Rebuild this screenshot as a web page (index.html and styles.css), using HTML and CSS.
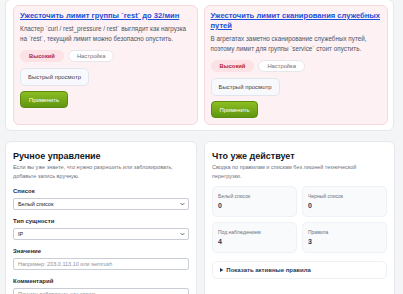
FILE: index.html
```html
<!DOCTYPE html>
<html lang="ru">

<head>
  <meta charset="UTF-8">
  <meta name="viewport" content="width=device-width, initial-scale=1.0">
  <title>Защита от ботов</title>
  <link rel="stylesheet" href="styles.css">
</head>

<body>
  <!-- Рекомендации -->
  <section class="panel suggestions">
    <div class="suggest-grid">
      <div class="suggest">
        <a href="#" class="suggest-title">Ужесточить лимит группы `rest` до 32/мин</a>
        <p class="suggest-text">Кластер `curl / rest_pressure / rest` выглядит как нагрузка на `rest`, текущий лимит можно безопасно опустить.</p>
        <div class="tags">
          <span class="tag high">Высокий</span>
          <span class="tag">Настройка</span>
        </div>
        <button class="btn-light">Быстрый просмотр</button>
        <button class="btn-apply">Применить</button>
      </div>
      <div class="suggest">
        <a href="#" class="suggest-title">Ужесточить лимит сканирования служебных путей</a>
        <p class="suggest-text">В агрегатах заметно сканирование служебных путей, поэтому лимит для группы `service` стоит опустить.</p>
        <div class="tags">
          <span class="tag high">Высокий</span>
          <span class="tag">Настройка</span>
        </div>
        <button class="btn-light">Быстрый просмотр</button>
        <button class="btn-apply">Применить</button>
      </div>
    </div>
  </section>

  <div class="columns">
    <!-- Ручное управление -->
    <section class="panel">
      <h2>Ручное управление</h2>
      <p class="muted">Если вы уже знаете, что нужно разрешить или заблокировать, добавьте запись вручную.</p>
      <form class="manual">
        <label>Список</label>
        <div class="select">
          <select>
            <option>Белый список</option>
            <option>Черный список</option>
          </select>
          <svg viewBox="0 0 8 5" width="5" height="4"><path d="M1 1l3 3 3-3" fill="none" stroke="#333" stroke-width="1.2"/></svg>
        </div>
        <label>Тип сущности</label>
        <div class="select">
          <select>
            <option>IP</option>
            <option>User-Agent</option>
          </select>
          <svg viewBox="0 0 8 5" width="5" height="4"><path d="M1 1l3 3 3-3" fill="none" stroke="#333" stroke-width="1.2"/></svg>
        </div>
        <label>Значение</label>
        <input type="text" placeholder="Например: 203.0.113.10 или semrush">
        <label>Комментарий</label>
        <input type="text" placeholder="Почему добавляете эту запись">
      </form>
    </section>

    <!-- Сводка -->
    <section class="panel">
      <h2>Что уже действует</h2>
      <p class="muted">Сводка по правилам и спискам без лишней технической перегрузки.</p>
      <div class="stats">
        <div class="stat"><span>Белый список</span><b>0</b></div>
        <div class="stat"><span>Черный список</span><b>0</b></div>
        <div class="stat"><span>Под наблюдением</span><b>4</b></div>
        <div class="stat"><span>Правила</span><b>3</b></div>
      </div>
      <details class="rules">
        <summary>Показать активные правила</summary>
      </details>
    </section>
  </div>
</body>

</html>
```

FILE: styles.css
```css
body {
  font-family: "Liberation Sans", Arial, sans-serif;
  margin: 0;
  padding: 0 8px 0 5px;
  background-color: #f4f5f7;
  color: #1f2937;
}

.panel {
  background-color: #fff;
  border: 1px solid #e6e8ec;
  border-radius: 6px;
}

.suggestions {
  margin-top: -1px;
  margin-right: 1px;
  padding: 5px 5px 5px 7px;
}

.suggest-grid {
  display: grid;
  grid-template-columns: 1fr 1fr;
  gap: 6px;
}

.suggest {
  background-color: #fdf1f3;
  border: 1px solid #f6d9de;
  border-radius: 6px;
  padding: 5px 6px 6px;
  display: flex;
  flex-direction: column;
  align-items: flex-start;
}

.suggest-title {
  color: #1d4ed8;
  font-size: 7.6px;
  font-weight: bold;
  line-height: 10px;
}

.suggest-text {
  font-size: 6.3px;
  line-height: 10px;
  color: #4b5563;
  margin: 3px 0 6px;
}

.tags {
  display: flex;
  gap: 4px;
}

.tag {
  font-size: 5.8px;
  line-height: 10px;
  padding: 0 8px;
  border-radius: 6px;
  border: 1px solid #e5e7eb;
  background-color: #fff;
  color: #6b7280;
}

.tag.high {
  background-color: #fce1e5;
  border-color: #fce1e5;
  color: #b4233b;
  font-weight: bold;
}

.btn-light {
  margin-top: 6px;
  height: 18px;
  font-family: inherit;
  font-size: 6px;
  padding: 0 7px;
  border: 1px solid #e1e6ee;
  border-radius: 5px;
  background-color: #f7f9fc;
  color: #374151;
}

.btn-apply {
  margin-top: 5px;
  height: 17px;
  font-family: inherit;
  font-size: 5.8px;
  padding: 0 8px;
  border: 1px solid #5c8c0e;
  border-radius: 4px;
  background: linear-gradient(#8cbe22, #5f9610);
  color: #fff;
}

.columns {
  display: grid;
  grid-template-columns: 192px 1fr;
  gap: 7px;
  margin-top: 10px;
}

.columns .panel {
  padding: 8px 7px;
}

h2 {
  font-size: 9px;
  line-height: 12px;
  margin: 0 0 1px;
  color: #111827;
}

.muted {
  font-size: 5.5px;
  line-height: 9px;
  color: #6b7280;
  margin: 0 0 5px;
}

.manual {
  display: flex;
  flex-direction: column;
}

.manual label {
  font-size: 6px;
  line-height: 8px;
  font-weight: bold;
  margin: 1px 0 3px;
}

.select {
  position: relative;
  margin-bottom: 6px;
}

.select svg {
  position: absolute;
  right: 4px;
  top: 4px;
}

.manual select,
.manual input {
  width: 100%;
  font-family: inherit;
  font-size: 5.5px;
  height: 12px;
  padding: 0 4px;
  border: 1px solid #c9ced6;
  border-radius: 2px;
  background-color: #fff;
  color: #111827;
  box-sizing: border-box;
  appearance: none;
  display: block;
}

.manual input {
  margin-bottom: 6px;
}

.manual input::placeholder {
  color: #8b919a;
}

.stats {
  display: grid;
  grid-template-columns: 1fr 1fr;
  gap: 5px;
}

.stat {
  background-color: #f8fafc;
  border: 1px solid #eef1f5;
  border-radius: 5px;
  padding: 6px 5px;
  display: flex;
  flex-direction: column;
  gap: 3px;
}

.stat span {
  font-size: 5px;
  line-height: 6px;
  color: #6b7280;
}

.stat b {
  font-size: 7px;
  line-height: 8px;
  color: #1e3a5f;
}

.rules {
  margin-top: 8px;
  border: 1px solid #eef1f5;
  border-radius: 5px;
  padding: 5px 7px;
  font-size: 6px;
  line-height: 6px;
  font-weight: bold;
  color: #1e3a5f;
}
```
